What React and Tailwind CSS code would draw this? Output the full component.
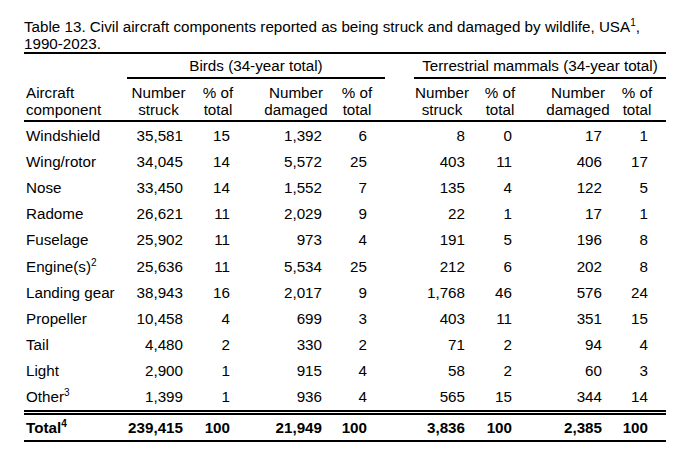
const sup = (n) => <sup className="text-[10px] top-[-6px]">{n}</sup>;

const rows = [
  ["Windshield", "35,581", "15", "1,392", "6", "8", "0", "17", "1"],
  ["Wing/rotor", "34,045", "14", "5,572", "25", "403", "11", "406", "17"],
  ["Nose", "33,450", "14", "1,552", "7", "135", "4", "122", "5"],
  ["Radome", "26,621", "11", "2,029", "9", "22", "1", "17", "1"],
  ["Fuselage", "25,902", "11", "973", "4", "191", "5", "196", "8"],
  [<>Engine(s){sup(2)}</>, "25,636", "11", "5,534", "25", "212", "6", "202", "8"],
  ["Landing gear", "38,943", "16", "2,017", "9", "1,768", "46", "576", "24"],
  ["Propeller", "10,458", "4", "699", "3", "403", "11", "351", "15"],
  ["Tail", "4,480", "2", "330", "2", "71", "2", "94", "4"],
  ["Light", "2,900", "1", "915", "4", "58", "2", "60", "3"],
  [<>Other{sup(3)}</>, "1,399", "1", "936", "4", "565", "15", "344", "14"],
];

const total = [<>Total{sup(4)}</>, "239,415", "100", "21,949", "100", "3,836", "100", "2,385", "100"];

// column template: label | birds x4 | spacer | mammals x4
const cols = "grid grid-cols-[103px_63px_56px_94px_45px_29px_56px_60px_90px_46px]";

// right padding for the numbers in each data column
const dataPad = ["pr-[7px]", "pr-[16px]", "pr-[18px]", "pr-[18px]", "pr-[5px]", "pr-[18px]", "pr-[18px]", "pr-[18px]"];

const heads = [
  { top: "Number", bottom: "struck", cls: "" },
  { top: "% of", bottom: "total", cls: "" },
  { top: "Number", bottom: "damaged", cls: "pl-[6px]" },
  { top: "% of", bottom: "total", cls: "pr-[11px]" },
  { top: "Number", bottom: "struck", cls: "" },
  { top: "% of", bottom: "total", cls: "" },
  { top: "Number", bottom: "damaged", cls: "pl-[6px]" },
  { top: "% of", bottom: "total", cls: "pr-[12px]" },
];

const DataRow = ({ cells, bold, height }) => (
  <div className={`${cols} items-center ${height} ${bold ? "font-bold" : ""}`}>
    <div className="pl-[2px] whitespace-nowrap">{cells[0]}</div>
    {cells.slice(1, 5).map((c, i) => (
      <div key={i} className={`text-right ${dataPad[i]}`}>
        {c}
      </div>
    ))}
    <div />
    {cells.slice(5).map((c, i) => (
      <div key={i} className={`text-right ${dataPad[i + 4]}`}>
        {c}
      </div>
    ))}
  </div>
);

export default function App() {
  return (
    <div className="w-[700px] h-[452px] bg-white overflow-hidden text-black font-['Liberation_Sans',Arial,sans-serif] text-[15.2px] leading-[17px]">
      <div className="pl-[24px] pt-[18px]">
        <p className="whitespace-nowrap">
          Table 13. Civil aircraft components reported as being struck and damaged by wildlife, USA{sup(1)},
          <br />
          1990-2023.
        </p>

        <div className="w-[642px]">
          <div className="h-[2px] bg-black" />

          {/* group headings */}
          <div className={`${cols} h-[23px] items-center`}>
            <div />
            <div className="col-span-4 text-center">Birds (34-year total)</div>
            <div />
            <div className="col-span-4 text-center">Terrestrial mammals (34-year total)</div>
          </div>
          <div className={cols}>
            <div />
            <div className="col-span-4 h-[2px] bg-black" />
            <div />
            <div className="col-span-4 h-[2px] bg-black" />
          </div>

          {/* column headings */}
          <div className={`${cols} h-[41px] pt-[5px]`}>
            <div className="pl-[2px]">
              Aircraft
              <br />
              component
            </div>
            {heads.slice(0, 4).map((h, i) => (
              <div key={i} className={`text-center whitespace-nowrap ${h.cls}`}>
                {h.top}
                <br />
                {h.bottom}
              </div>
            ))}
            <div />
            {heads.slice(4).map((h, i) => (
              <div key={i} className={`text-center whitespace-nowrap ${h.cls}`}>
                {h.top}
                <br />
                {h.bottom}
              </div>
            ))}
          </div>
          <div className="h-[2px] bg-black" />

          {rows.map((r, i) => (
            <DataRow key={i} cells={r} height="h-[26.2px]" />
          ))}

          <div className="h-[5px] border-y-2 border-black" />
          <DataRow cells={total} bold height="h-[25px]" />
          <div className="h-[2px] bg-black" />
        </div>
      </div>
    </div>
  );
}
